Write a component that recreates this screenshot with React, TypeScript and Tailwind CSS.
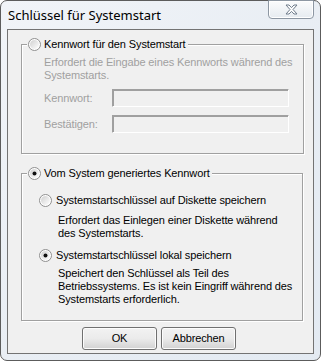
import React from 'react';

function Radio({ checked }: { checked: boolean }) {
  return (
    <svg className="w-[13px] h-[13px] shrink-0" viewBox="0 0 13 13">
      <defs>
        <linearGradient id="rg" x1="0" y1="0" x2="1" y2="1">
          <stop offset="0" stopColor="#d0d0d0" />
          <stop offset="1" stopColor="#ffffff" />
        </linearGradient>
      </defs>
      <circle cx="6.5" cy="6.5" r="6" fill="#ffffff" stroke="#8f8f8f" strokeWidth="1" />
      <circle cx="6.5" cy="6.5" r="4.5" fill="url(#rg)" />
      {checked && <circle cx="6.5" cy="6.5" r="2" fill="#111111" />}
    </svg>
  );
}

function ClassicInput() {
  return (
    <div className="w-[177px] h-[18px] shrink-0 bg-[#f0f0f0] border-t border-l border-t-[#a0a0a0] border-l-[#a0a0a0] border-b border-r border-b-white border-r-white">
      <div className="w-full h-full border-t border-l border-[#696969]/60" />
    </div>
  );
}

function DialogButton({ label }: { label: string }) {
  return (
    <button className="w-[75px] h-[23px] rounded-[3px] border border-[#707070] bg-gradient-to-b from-[#f2f2f2] via-[#ebebeb] to-[#d2d2d2] text-[11px] text-black leading-none shadow-[inset_0_0_0_1px_#fcfcfc]">
      {label}
    </button>
  );
}

export default function App() {
  const groupBox =
    'border border-[#a0a0a0] shadow-[1px_1px_0_#ffffff,inset_1px_1px_0_#ffffff]';

  return (
    <div className="w-[321px] h-[361px] bg-white" style={{ fontFamily: '"Liberation Sans", Arial, sans-serif' }}>
      <div className="w-[321px] h-[361px] rounded-[7px] border border-[#5c5c5c] bg-gradient-to-br from-[#f1f4f8] via-[#e9eef4] to-[#e3eaf2] flex flex-col px-[6px] pb-[6px]">
        {/* title bar */}
        <div className="h-[28px] flex items-start justify-between">
          <span
            className="pt-[5px] pl-[1px] text-[13px] text-black"
            style={{ fontFamily: '"Noto Sans", "Open Sans", sans-serif' }}
          >
            Schlüssel für Systemstart
          </span>
          <div className="w-[46px] h-[19px] -mt-px rounded-b-[4px] border border-[#8d97a3] bg-gradient-to-b from-[#fbfcfd] to-[#e6ebf0] flex items-center justify-center shadow-[inset_0_0_0_1px_#ffffff]">
            <svg width="13" height="11" viewBox="0 0 13 11">
              <path
                d="M1 1h3l2.5 2.6L9 1h3L8 5.5 12 10H9L6.5 7.4 4 10H1l4-4.5z"
                fill="#ffffff"
                stroke="#6f7c8b"
                strokeWidth="1"
                strokeLinejoin="round"
              />
            </svg>
          </div>
        </div>

        {/* client */}
        <div className="flex-1 border border-[#737373] bg-[#f0f0f0] px-[13px] text-[11px] tracking-[-0.12px] leading-[13px] text-black">
          <fieldset className={`mt-[8px] pl-[22px] pr-[10px] pb-[20px] ${groupBox}`}>
            <legend className="-ml-[17px] pl-[1px] pr-[2px] flex items-center gap-[3px] h-[13px] bg-[#f0f0f0]">
              <Radio checked={false} />
              <span>Kennwort für den Systemstart</span>
            </legend>
            <p className="mt-[5px] text-[#a0a0a0] whitespace-nowrap">
              Erfordert die Eingabe eines Kennworts während des
              <br />
              Systemstarts.
            </p>
            <div className="mt-[7px] flex items-center">
              <span className="w-[68px] text-[#a0a0a0]">Kennwort:</span>
              <ClassicInput />
            </div>
            <div className="mt-[8px] flex items-center">
              <span className="w-[68px] text-[#a0a0a0]">Bestätigen:</span>
              <ClassicInput />
            </div>
          </fieldset>

          <fieldset className={`mt-[13px] pl-[17px] pr-[10px] h-[154px] ${groupBox}`}>
            <legend className="-ml-[12px] pl-[1px] pr-[2px] flex items-center gap-[3px] h-[13px] bg-[#f0f0f0]">
              <Radio checked={true} />
              <span>Vom System generiertes Kennwort</span>
            </legend>
            <div className="mt-[14px] flex items-center gap-[4px] h-[13px]">
              <Radio checked={false} />
              <span>Systemstartschlüssel auf Diskette speichern</span>
            </div>
            <p className="mt-[7px] pl-[19px] whitespace-nowrap">
              Erfordert das Einlegen einer Diskette während
              <br />
              des Systemstarts.
            </p>
            <div className="mt-[9px] flex items-center gap-[4px] h-[13px]">
              <Radio checked={true} />
              <span>Systemstartschlüssel lokal speichern</span>
            </div>
            <p className="mt-[5px] pl-[19px] whitespace-nowrap">
              Speichert den Schlüssel als Teil des
              <br />
              Betriebssystems. Es ist kein Eingriff während des
              <br />
              Systemstarts erforderlich.
            </p>
          </fieldset>

          <div className="mt-[6px] flex pl-[61px] gap-[4px]">
            <DialogButton label="OK" />
            <DialogButton label="Abbrechen" />
          </div>
        </div>
      </div>
    </div>
  );
}
